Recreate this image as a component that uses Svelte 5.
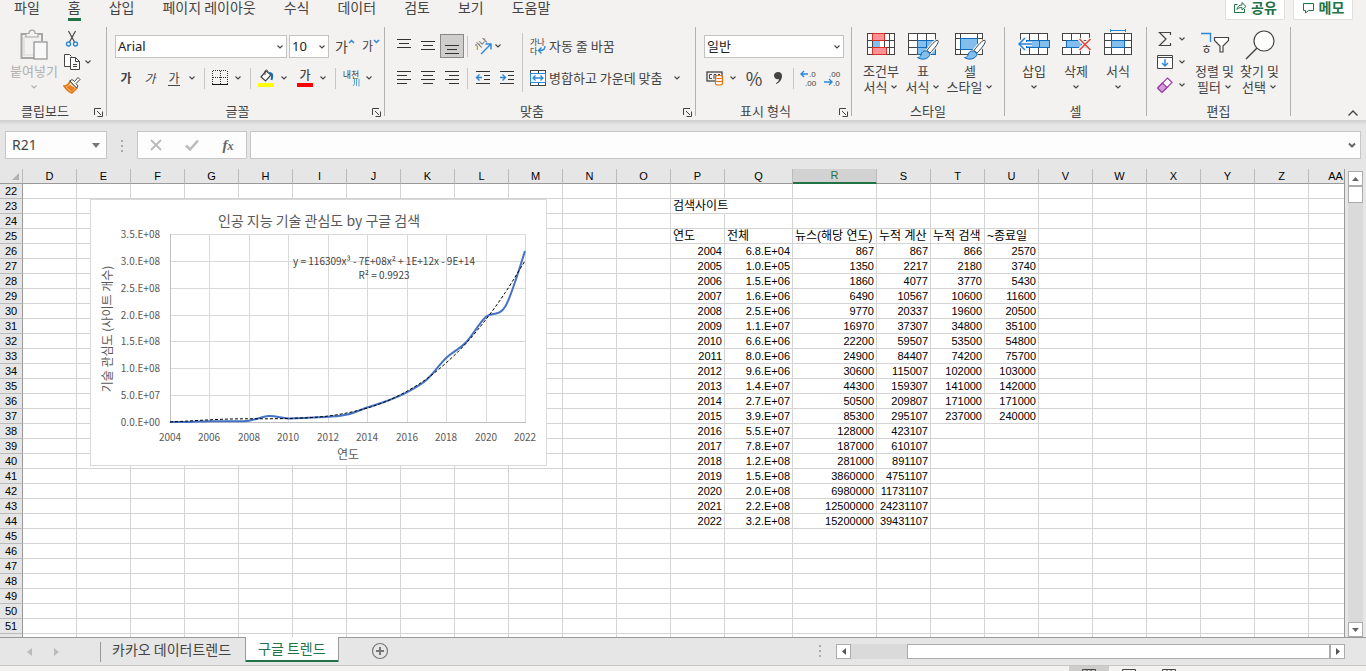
<script>
  const tabs = ['파일', '홈', '삽입', '페이지 레이아웃', '수식', '데이터', '검토', '보기', '도움말'];
  let activeTab = $state('홈');

  const columns = [
    ...'DEFGHIJKLMNOP'.split('').map(name => ({ name, width: 54 })),
    { name: 'Q', width: 68 },
    { name: 'R', width: 84 },
    ...'STUVWXYZ'.split('').map(name => ({ name, width: 54 })),
    { name: 'AA', width: 54 },
  ];

  const firstRow = 22;
  const lastRow = 51;
  const rowNumbers = Array.from({ length: lastRow - firstRow + 1 }, (_, i) => firstRow + i);

  // P, Q, R, S, T, U from row 26 down
  const records = [
    ['2004', '6.8.E+04', '867', '867', '866', '2570'],
    ['2005', '1.0.E+05', '1350', '2217', '2180', '3740'],
    ['2006', '1.5.E+06', '1860', '4077', '3770', '5430'],
    ['2007', '1.6.E+06', '6490', '10567', '10600', '11600'],
    ['2008', '2.5.E+06', '9770', '20337', '19600', '20500'],
    ['2009', '1.1.E+07', '16970', '37307', '34800', '35100'],
    ['2010', '6.6.E+06', '22200', '59507', '53500', '54800'],
    ['2011', '8.0.E+06', '24900', '84407', '74200', '75700'],
    ['2012', '9.6.E+06', '30600', '115007', '102000', '103000'],
    ['2013', '1.4.E+07', '44300', '159307', '141000', '142000'],
    ['2014', '2.7.E+07', '50500', '209807', '171000', '171000'],
    ['2015', '3.9.E+07', '85300', '295107', '237000', '240000'],
    ['2016', '5.5.E+07', '128000', '423107'],
    ['2017', '7.8.E+07', '187000', '610107'],
    ['2018', '1.2.E+08', '281000', '891107'],
    ['2019', '1.5.E+08', '3860000', '4751107'],
    ['2020', '2.0.E+08', '6980000', '11731107'],
    ['2021', '2.2.E+08', '12500000', '24231107'],
    ['2022', '3.2.E+08', '15200000', '39431107'],
  ];

  const labels = {
    P23: '검색사이트',
    P25: '연도',
    Q25: '전체',
    R25: '뉴스(해당 연도)',
    S25: '누적 계산',
    T25: '누적 검색',
    U25: '~종료일',
  };

  function cellText(col, row) {
    if (labels[col + row]) return labels[col + row];
    const i = 'PQRSTU'.indexOf(col);
    return i < 0 ? '' : (records[row - 26]?.[i] ?? '');
  }

  // chart
  const plot = { left: 80, top: 35, width: 355, height: 188 };
  const searches = [0.001, 0.001, 0.015, 0.016, 0.025, 0.11, 0.066, 0.08, 0.096, 0.14, 0.27, 0.39, 0.55, 0.78, 1.19, 1.48, 1.95, 2.15, 3.18];
  const trend = [0.0, 0.02, 0.04, 0.055, 0.06, 0.06, 0.065, 0.08, 0.11, 0.17, 0.26, 0.39, 0.57, 0.8, 1.1, 1.46, 1.9, 2.41, 3.0];
  const yTicks = ['3.5.E+08', '3.0.E+08', '2.5.E+08', '2.0.E+08', '1.5.E+08', '1.0.E+08', '5.0.E+07', '0.0.E+00'];
  const xTicks = [2004, 2006, 2008, 2010, 2012, 2014, 2016, 2018, 2020, 2022];

  const tickX = i => Math.round(plot.left + (i * plot.width) / 9);
  const tickY = i => Math.round(plot.top + (i * plot.height) / 7);

  function smooth(values) {
    const pts = values.map((v, i) => [
      plot.left + (i * plot.width) / 18,
      plot.top + plot.height * (1 - v / 3.5),
    ]);
    let d = `M${pts[0]}`;
    for (let i = 0; i < pts.length - 1; i++) {
      const a = pts[i - 1] ?? pts[i];
      const b = pts[i];
      const c = pts[i + 1];
      const e = pts[i + 2] ?? c;
      d += `C${b[0] + (c[0] - a[0]) / 6},${b[1] + (c[1] - a[1]) / 6} ${c[0] - (e[0] - b[0]) / 6},${c[1] - (e[1] - b[1]) / 6} ${c}`;
    }
    return d;
  }

  let fontName = $state('Arial');
  let fontSize = $state('10');
  let cellName = $state('R21');
  let formula = $state('');
</script>

{#snippet chev()}
  <svg class="chev" width="8" height="6" viewBox="0 0 8 6"><path d="M1.500 1.500L4 4l2.500-2.500" fill="none" stroke="currentColor" stroke-width="1.100" /></svg>
{/snippet}

{#snippet drop(label)}
  <button class="drop" aria-label={label}>{@render chev()}</button>
{/snippet}

{#snippet lines(rows)}
  <svg width="16" height="18" viewBox="0 0 16 18" shape-rendering="crispEdges">
    {#each rows as [x, y, w]}
      <rect {x} {y} width={w} height="1" fill="#333" />
    {/each}
  </svg>
{/snippet}

{#snippet footer(name, launcher)}
  <div class="footer">
    <span>{name}</span>
    {#if launcher}
      <button aria-label="{name} 설정">
        <svg width="9" height="9" viewBox="0 0 9 9" fill="none" stroke="#444"><path d="M.5 7V.5H7M3 3l4 4M8.500 3.500v5h-5" /></svg>
      </button>
    {/if}
  </div>
{/snippet}

{#snippet brush()}
  <path d="M31 7.500c-2-1.500-8 6-11 10l3 2.500c4-4 9.500-10.500 8-12.500z" fill="#fff" stroke="#f3f2f1" stroke-width="3" />
  <path d="M31 7.500c-2-1.500-8 6-11 10l3 2.500c4-4 9.500-10.500 8-12.500z" fill="#fff" stroke="#444" />
  <path d="M19.500 18c-3-.5-5 1-5.500 4-.5 2-2 2.500-3.500 2.500 4 3 12 2 12.500-4z" fill="#83beec" stroke="#0f6cbd" />
{/snippet}

<div class="app">
  <header class="tabs">
    <nav>
      {#each tabs as tab}
        <button class:active={tab === activeTab} onclick={() => (activeTab = tab)}><span>{tab}</span></button>
      {/each}
    </nav>
    <div class="actions">
      <button>
        <svg width="14" height="14" viewBox="0 0 14 14" fill="none" stroke="#217346"><path d="M4.500 4.500h-3v8h10V9" /><path d="M4 9.500c.5-3 2-4.500 5-4.500V2.500l4 4-4 3.500V7.500C6.500 7.500 5 8 4 9.500z" /></svg>
        공유
      </button>
      <button>
        <svg width="13" height="13" viewBox="0 0 13 13" fill="none" stroke="#217346"><path d="M1.500 2.500h10v7h-5l-3 2.500V9.500h-2z" /></svg>
        메모
      </button>
    </div>
  </header>

  <div class="ribbon">
    <section class="group">
      <div class="body clipboard">
        <button class="big disabled">
          <svg width="28" height="32" viewBox="0 0 28 32" fill="none" stroke="#a6a6a6" stroke-width="1.200">
            <path d="M7 5H1.500v24H14M18 5h4v7" stroke-width="2" /><path d="M4 8v18h10M4 8h2" stroke="#d8d8d8" />
            <path d="M6 8V4.500h3C9 0 15 0 15 4.500h3V8z" fill="#f3f2f1" /><rect x="14" y="13" width="13" height="17" fill="#f8f8f8" stroke="#8e8e8e" />
          </svg>
          <span>붙여넣기</span>
          {@render chev()}
        </button>
        <div class="stack">
          <div class="line">
            <button aria-label="잘라내기">
              <svg width="16" height="18" viewBox="0 0 16 18" fill="none"><path d="M4.500 1l6 11M11.500 1l-6 11" stroke="#444" stroke-width="1.200" /><circle cx="4.500" cy="14" r="2" stroke="#2b88d8" stroke-width="1.400" /><circle cx="11.500" cy="14" r="2" stroke="#2b88d8" stroke-width="1.400" /></svg>
            </button>
          </div>
          <div class="line">
            <button aria-label="복사">
              <svg width="18" height="18" viewBox="0 0 18 18" fill="#fff" stroke="#444"><path d="M7.500 13.500h-6v-12h5l2 2" /><path d="M7.500 4.500h5l4 4v8h-9z" /><path d="M12.500 4.500v4h4M10 11.500h4M10 13.500h4" fill="none" /></svg>
            </button>
            {@render drop('복사 옵션')}
          </div>
          <div class="line">
            <button aria-label="서식 복사">
              <svg width="18" height="18" viewBox="0 0 18 18"><path d="M7 5l7 7-5 5c-3-1-6-4-8-7 3 0 5-2 6-5z" fill="#fbe0c6" stroke="#e3730b" stroke-width="1.500" /><path d="M3 11l6 5 3-4-5-3z" fill="#ed7d1a" /><path d="M7 5l2-1.500 2.500 2L15 1.500l2 2-4 4 2 2.500-1.500 2z" fill="#fff" stroke="#444" /></svg>
            </button>
          </div>
        </div>
      </div>
      {@render footer('클립보드', true)}
    </section>

    <section class="group font">
      <div class="body rows">
        <div class="row combos">
          <label class="combo wide">
            <select bind:value={fontName} aria-label="글꼴"><option>Arial</option></select>
            {@render chev()}
          </label>
          <label class="combo size">
            <select bind:value={fontSize} aria-label="글꼴 크기"><option>10</option></select>
            {@render chev()}
          </label>
          <button class="tool grow">가<svg width="7" height="5" viewBox="0 0 7 5"><path d="M1 4l2.500-2.500L6 4" fill="none" stroke="#2b88d8" stroke-width="1.500" /></svg></button>
          <button class="tool shrink">가<svg width="7" height="5" viewBox="0 0 7 5"><path d="M1 1l2.500 2.500L6 1" fill="none" stroke="#2b88d8" stroke-width="1.500" /></svg></button>
        </div>
        <div class="row">
          <button class="tool bold">가</button>
          <button class="tool italic">가</button>
          <button class="tool underline"><span>가</span></button>
          {@render drop('밑줄 옵션')}
          <i class="sep far"></i>
          <button class="tool" aria-label="테두리">
            <svg width="16" height="16" viewBox="0 0 16 16" shape-rendering="crispEdges"><path d="M1 .5h14M.5 1v13M15.500 1v13M8.500 1v13M1 7.500h14" stroke="#333" stroke-dasharray="1 1" fill="none" /><rect y="14" width="16" height="1" fill="#111" /></svg>
          </button>
          {@render drop('테두리 옵션')}
          <i class="sep far"></i>
          <button class="tool" aria-label="채우기 색">
            <svg width="16" height="18" viewBox="0 0 16 18"><path d="M8 2L3 8l4.500 4 5.500-6z" fill="#fff" stroke="#444" stroke-width="1.200" /><path d="M7 6V2.500C7 .5 10 .5 10 3" fill="none" stroke="#444" /><path d="M11 4c4 0 3.500 3 2.500 7" fill="none" stroke="#0f6cbd" stroke-width="2" /><rect y="14" width="16" height="4" fill="#ff0" /></svg>
          </button>
          {@render drop('채우기 색 옵션')}
          <button class="tool color"><span>가</span></button>
          {@render drop('글꼴 색 옵션')}
          <i class="sep far"></i>
          <button class="tool phonetic">내천<svg width="8" height="8" viewBox="0 0 8 8"><path d="M2.500 0v5L1 7M4.500 0v7M7 0v7.500" fill="none" stroke="#5ba3d9" /></svg></button>
          {@render drop('윗주 옵션')}
        </div>
      </div>
      {@render footer('글꼴', true)}
    </section>

    <section class="group align">
      <div class="body">
        <div class="rows pane">
          <div class="row">
            <button class="tool" aria-label="위쪽 맞춤">{@render lines([[1, 2, 14], [3, 6, 10], [1, 10, 14]])}</button>
            <button class="tool" aria-label="가운데 맞춤">{@render lines([[1, 4, 14], [3, 8, 10], [1, 12, 14]])}</button>
            <button class="tool pressed" aria-label="아래쪽 맞춤">{@render lines([[1, 8, 14], [3, 12, 10], [1, 16, 14]])}</button>
            <i class="sep"></i>
            <button class="orient" aria-label="방향">
              <svg width="17" height="17" viewBox="0 0 17 17"><text x="1" y="12" transform="rotate(-45 3 11)" font-size="8" fill="#444">가나</text><path d="M6 16L15.500 6.500M10.500 6H16v5.500" fill="none" stroke="#2b88d8" stroke-width="1.400" /></svg>
              {@render chev()}
            </button>
          </div>
          <div class="row">
            <button class="tool" aria-label="왼쪽 맞춤">{@render lines([[1, 2, 14], [1, 6, 10], [1, 10, 14], [1, 14, 10]])}</button>
            <button class="tool" aria-label="가운데 맞춤">{@render lines([[1, 2, 14], [3, 6, 10], [1, 10, 14], [3, 14, 10]])}</button>
            <button class="tool" aria-label="오른쪽 맞춤">{@render lines([[1, 2, 14], [5, 6, 10], [1, 10, 14], [5, 14, 10]])}</button>
            <i class="sep"></i>
            <button class="tool" aria-label="내어쓰기">
              <svg width="16" height="18" viewBox="0 0 16 18" fill="none"><path d="M1 2.500h14M9 6.500h6M9 10.500h6M1 14.500h14" stroke="#333" /><path d="M7 8.500H2M4.500 5.500l-3 3 3 3" stroke="#2b88d8" stroke-width="1.400" /></svg>
            </button>
            <button class="tool" aria-label="들여쓰기">
              <svg width="16" height="18" viewBox="0 0 16 18" fill="none"><path d="M1 2.500h14M9 6.500h6M9 10.500h6M1 14.500h14" stroke="#333" /><path d="M1 8.500h5M3.500 5.500l3 3-3 3" stroke="#2b88d8" stroke-width="1.400" /></svg>
            </button>
          </div>
        </div>
        <i class="sep tall"></i>
        <div class="rows texts">
          <button class="row">
            <svg width="16" height="20" viewBox="0 0 16 20"><text x="0" y="9" font-size="8" fill="#333">가나</text><text x="0" y="18" font-size="8" fill="#333">다</text><path d="M15 10c0 3-1 4.500-6 4.500M11.500 11.500l-3 3 3 3" fill="none" stroke="#2b88d8" stroke-width="1.400" /></svg>
            자동 줄 바꿈
          </button>
          <button class="row">
            <svg width="16" height="16" viewBox="0 0 16 16" fill="#fff" stroke="#444" shape-rendering="crispEdges"><rect x=".5" y=".5" width="15" height="15" /><path d="M8.500 0v16" /><rect x=".5" y="3.500" width="15" height="9" stroke="#2b88d8" /><path d="M3 8h10M5.500 5.500L3 8l2.500 2.500M10.500 5.500L13 8l-2.500 2.500" fill="none" stroke="#2b88d8" stroke-width="1.300" shape-rendering="auto" /></svg>
            병합하고 가운데 맞춤
            {@render chev()}
          </button>
        </div>
      </div>
      {@render footer('맞춤', true)}
    </section>

    <section class="group number">
      <div class="body rows">
        <div class="row combos">
          <label class="combo format">
            <select aria-label="표시 형식"><option>일반</option></select>
            {@render chev()}
          </label>
        </div>
        <div class="row">
          <button class="tool" aria-label="회계 표시 형식">
            <svg width="18" height="16" viewBox="0 0 18 16" fill="none"><rect x="1" y="2" width="15" height="9" stroke="#444" stroke-width="1.300" /><path d="M6 4.500H3.500v4H6M8 9V4.500h2V9M12 4.500h2" stroke="#444" /><path d="M9.500 7v6.500c0 2 7 2 7 0V7c0-2-7-2-7 0z" fill="#fff" stroke="#e3730b" stroke-width="1.200" /><path d="M9.500 7.500c0 1.500 7 1.500 7 0M9.500 10.500c0 1.500 7 1.500 7 0" stroke="#e3730b" stroke-width="1.200" /></svg>
          </button>
          {@render drop('회계 옵션')}
          <button class="tool percent">%</button>
          <button class="tool" aria-label="쉼표 스타일">
            <svg width="10" height="14" viewBox="0 0 10 14"><path d="M5 1c3 0 4 2 4 4 0 4-3 7-6 8v-1c2-1 3-2.500 3-4C3.500 9 1 7 1 4.500 1 2.500 3 1 5 1z" fill="#444" /></svg>
          </button>
          <i class="sep"></i>
          <button class="tool" aria-label="자릿수 늘림">
            <svg width="18" height="20" viewBox="0 0 18 20"><text x="9" y="9" font-size="8" fill="#444">.0</text><text x="5" y="18" font-size="8" fill="#444">.00</text><path d="M8 6H1.500M4 3L1 6l3 3" fill="none" stroke="#2b88d8" stroke-width="1.400" /></svg>
          </button>
          <button class="tool" aria-label="자릿수 줄임">
            <svg width="18" height="20" viewBox="0 0 18 20"><text x="5" y="9" font-size="8" fill="#444">.00</text><text x="9" y="18" font-size="8" fill="#444">.0</text><path d="M0 14h7.500M5 11l3 3-3 3" fill="none" stroke="#2b88d8" stroke-width="1.400" /></svg>
          </button>
        </div>
      </div>
      {@render footer('표시 형식', true)}
    </section>

    <section class="group styles">
      <div class="body">
        <button class="big">
          <svg width="30" height="32" viewBox="0 0 30 32" fill="#fff" stroke="#444" shape-rendering="crispEdges"><rect x="1.500" y="4.500" width="27" height="21" /><path d="M1 11.500h28M1 18.500h28M6.500 4v22M18.500 4v22M23.500 4v22" /><path d="M6.500 4.500h12v7h-12zM6.500 18.500h14v7h-14z" fill="#ff9197" stroke="#d93025" /><path d="M7 12h7v6H7z" fill="#83beec" stroke="none" /></svg>
          <span>조건부</span>
          <span>서식{@render chev()}</span>
        </button>
        <button class="big">
          <svg width="32" height="32" viewBox="0 0 32 32" fill="#fff" stroke="#444"><g shape-rendering="crispEdges"><rect x="1.500" y="4.500" width="27" height="21" /><path d="M1 11.500h28M1 18.500h28M10.500 4v22M19.500 4v22" /><path d="M10.500 11.500h18v14h-18z" fill="#83beec" stroke="#0f6cbd" /><path d="M10 18.500h18M19.500 12v13" stroke="#0f6cbd" /></g><g transform="translate(0 4)">{@render brush()}</g></svg>
          <span>표</span>
          <span>서식{@render chev()}</span>
        </button>
        <button class="big long">
          <svg width="32" height="32" viewBox="0 0 32 32" fill="#fff" stroke="#444"><g shape-rendering="crispEdges"><rect x="1.500" y="4.500" width="27" height="21" /><path d="M1 9.500h28M1 20.500h28M6.500 4v22M23.500 4v22" /><path d="M6.500 9.500h17v11h-17z" fill="#83beec" stroke="#0f6cbd" /></g><g transform="translate(0 4)">{@render brush()}</g></svg>
          <span>셀</span>
          <span>스타일{@render chev()}</span>
        </button>
      </div>
      {@render footer('스타일', false)}
    </section>

    <section class="group cells">
      <div class="body">
        <button class="big">
          <svg width="34" height="32" viewBox="0 0 34 32" fill="#fff" stroke="#444"><g shape-rendering="crispEdges"><path d="M3.500 4.500h27v21h-27zM12.500 4v22M21.500 4v22" /><path d="M9.500 11.500h23v7h-23zM22.500 11v8" fill="#83beec" stroke="#0f6cbd" /></g><path d="M15 15H2.500M8 9l-6 6 6 6" fill="none" stroke="#f3f2f1" stroke-width="4" /><path d="M15 15H2.500M8 9l-6 6 6 6" fill="none" stroke="#2b88d8" stroke-width="1.500" /></svg>
          <span>삽입</span>
          {@render chev()}
        </button>
        <button class="big">
          <svg width="34" height="32" viewBox="0 0 34 32" fill="#fff" stroke="#444"><g shape-rendering="crispEdges"><path d="M3.500 4.500h27v7h-27zM12.500 4v7M21.500 4v7M3.500 18.500h27v7h-27zM12.500 18v8M21.500 18v8" /><path d="M7.500 11.500h15v7h-15z" fill="#83beec" stroke="#0f6cbd" /></g><path d="M20.500 10l11 11M31.500 10l-11 11" stroke="#f3f2f1" stroke-width="4" /><path d="M20.500 10l11 11M31.500 10l-11 11" stroke="#e8403a" stroke-width="1.500" /></svg>
          <span>삭제</span>
          {@render chev()}
        </button>
        <button class="big">
          <svg width="34" height="32" viewBox="0 0 34 32" fill="#fff" stroke="#444" shape-rendering="crispEdges"><path d="M3.500 4.500h27v21h-27zM3 11.500h28M3 18.500h28M10.500 4v22M23.500 4v22" /><path d="M10.500 11.500h13v7h-13z" fill="#83beec" stroke="#0f6cbd" /><path d="M9.500 0v3M24.500 0v3M9 1.500h16" stroke="#2b88d8" /></svg>
          <span>서식</span>
          {@render chev()}
        </button>
      </div>
      {@render footer('셀', false)}
    </section>

    <section class="group edit">
      <div class="body">
        <div class="stack">
          <div class="line">
            <button aria-label="자동 합계"><svg width="16" height="16" viewBox="0 0 16 16"><path d="M13.500 4V1.500h-11L9 8l-6.500 6.500h11V12" fill="none" stroke="#444" stroke-width="1.200" /></svg></button>
            {@render drop('합계 옵션')}
          </div>
          <div class="line">
            <button aria-label="채우기"><svg width="16" height="14" viewBox="0 0 16 14" fill="#fff" stroke="#444"><path d="M.5.5h15v13H.500zM0 2.500h16" /><path d="M8 4v7M5 8l3 3 3-3" fill="none" stroke="#2b88d8" stroke-width="1.400" /></svg></button>
            {@render drop('채우기 옵션')}
          </div>
          <div class="line">
            <button aria-label="지우기"><svg width="16" height="16" viewBox="0 0 16 16" stroke="#9b3fa5" stroke-width="1.200"><path d="M10.500 1l4.500 4.500L5.500 15H4.500L1 11.500v-1z" fill="#fff" /><path d="M5.500 6L1 10.500v1L4.500 15h1l4.500-4.500z" fill="#d59ddb" /></svg></button>
            {@render drop('지우기 옵션')}
          </div>
        </div>
        <button class="big">
          <svg width="32" height="32" viewBox="0 0 32 32" fill="none"><path d="M2 4.500h9.500V13" stroke="#2b88d8" stroke-width="1.400" /><text x="2" y="25" font-size="12" fill="#333">ㅎ</text><path d="M15.500 8.500h14v3l-5.500 5.500v6h-3v-6l-5.500-5.500z" fill="#fff" stroke="#444" stroke-width="1.200" /></svg>
          <span>정렬 및</span>
          <span>필터{@render chev()}</span>
        </button>
        <button class="big">
          <svg width="32" height="32" viewBox="0 0 32 32"><circle cx="20" cy="12" r="10" fill="#fff" stroke="#444" stroke-width="1.200" /><path d="M13 19L2 30" stroke="#444" stroke-width="1.400" /></svg>
          <span>찾기 및</span>
          <span>선택{@render chev()}</span>
        </button>
      </div>
      {@render footer('편집', false)}
    </section>

    <button class="collapse" aria-label="리본 메뉴 축소">
      <svg width="12" height="8" viewBox="0 0 12 8"><path d="M1.500 6.500L6 2l4.500 4.500" fill="none" stroke="#444" stroke-width="1.400" /></svg>
    </button>
  </div>

  <div class="formula-bar">
    <div class="box name">
      <input bind:value={cellName} aria-label="이름 상자" />
      <button aria-label="이름 목록"><svg width="8" height="5" viewBox="0 0 8 5"><path d="M0 0h8L4 5z" fill="#777" /></svg></button>
    </div>
    <svg class="dots" width="3" height="12" viewBox="0 0 3 12" fill="#aaa"><path d="M0 0h2v2H0zM0 5h2v2H0zM0 10h2v2H0z" /></svg>
    <div class="box checks">
      <button aria-label="취소"><svg width="12" height="12" viewBox="0 0 12 12"><path d="M1 1l10 10M11 1L1 11" stroke="#bbb" stroke-width="1.800" /></svg></button>
      <button aria-label="입력"><svg width="14" height="12" viewBox="0 0 14 12"><path d="M1 6.500L5 10.500 13 1.500" fill="none" stroke="#bbb" stroke-width="2.500" /></svg></button>
      <button class="fx">f<small>x</small></button>
    </div>
    <div class="box entry">
      <input bind:value={formula} aria-label="수식 입력줄" />
      <button aria-label="수식 입력줄 확장"><svg width="8" height="7" viewBox="0 0 8 7"><path d="M1 1.500l3 3 3-3" fill="none" stroke="#666" stroke-width="2" /></svg></button>
    </div>
  </div>

  <main>
    <div class="sheet">
      <table>
        <colgroup>
          <col style="width: 23px" />
          {#each columns as col}
            <col style="width: {col.width}px" />
          {/each}
        </colgroup>
        <thead>
          <tr>
            <th class="corner"><svg width="7" height="7" viewBox="0 0 7 7"><path d="M7 0v7H0z" fill="#b2b2b2" /></svg></th>
            {#each columns as col}
              <th class:selected={col.name === 'R'}>{col.name}</th>
            {/each}
          </tr>
        </thead>
        <tbody>
          {#each rowNumbers as row}
            <tr>
              <th>{row}</th>
              {#each columns as col}
                <td class:label={labels[col.name + row]} class:spill={col.name + row === 'P23'}>{cellText(col.name, row)}</td>
              {/each}
            </tr>
          {/each}
          <tr>
            <th></th>
            {#each columns as _}<td></td>{/each}
          </tr>
        </tbody>
      </table>

      <svg class="chart" width="457" height="268" viewBox="0 0 457 268">
        <rect x=".5" y=".5" width="456" height="266" fill="#fff" stroke="#d9d9d9" />
        <g stroke="#d9d9d9" shape-rendering="crispEdges">
          {#each yTicks as _, i}
            <path d="M{plot.left} {tickY(i) + 0.5}h{plot.width}" />
          {/each}
          {#each xTicks as _, i}
            <path d="M{tickX(i) + 0.5} {plot.top}v{plot.height}" />
          {/each}
          <path d="M{plot.left + 0.5} {plot.top}v{plot.height + 0.5}h{plot.width}" fill="none" stroke="#bfbfbf" />
        </g>
        <path d={smooth(searches)} fill="none" stroke="#4472c4" stroke-width="2" />
        <path d={smooth(trend)} fill="none" stroke="#000" stroke-dasharray="3 2" />
        <g fill="#595959" font-size="10">
          {#each yTicks as tick, i}
            <text x="70" y={tickY(i) + 4} text-anchor="end">{tick}</text>
          {/each}
          {#each xTicks as tick, i}
            <text x={tickX(i)} y="242" text-anchor="middle">{tick}</text>
          {/each}
        </g>
        <g fill="#595959" text-anchor="middle">
          <text x="229" y="27" font-size="14">인공 지능 기술 관심도 by 구글 검색</text>
          <text x="258" y="260" font-size="12">연도</text>
          <text x="22" y="130" font-size="12" transform="rotate(-90 22 130)">기술 관심도 (사이트 개수)</text>
          <text x="294" y="66" font-size="10" fill="#444">y = 116309x³ - 7E+08x² + 1E+12x - 9E+14</text>
          <text x="294" y="80" font-size="10" fill="#444">R² = 0.9923</text>
        </g>
      </svg>
    </div>
    <div class="vscroll">
      <button aria-label="위로"><svg width="7" height="4" viewBox="0 0 7 4"><path d="M0 4h7L3.500 0z" fill="#666" /></svg></button>
      <div class="track"><div class="thumb"></div></div>
      <button aria-label="아래로"><svg width="7" height="4" viewBox="0 0 7 4"><path d="M0 0h7L3.500 4z" fill="#666" /></svg></button>
    </div>
  </main>

  <footer class="sheets">
    <div class="nav">
      <button aria-label="이전 시트"><svg width="5" height="8" viewBox="0 0 5 8"><path d="M5 0v8L0 4z" fill="#bbb" /></svg></button>
      <button aria-label="다음 시트"><svg width="5" height="8" viewBox="0 0 5 8"><path d="M0 0v8l5-4z" fill="#bbb" /></svg></button>
    </div>
    <button class="sheet-tab">카카오 데이터트렌드</button>
    <button class="sheet-tab current">구글 트렌드</button>
    <button class="add" aria-label="새 시트">
      <svg width="18" height="18" viewBox="0 0 18 18" fill="none" stroke="#777"><circle cx="9" cy="9" r="7.500" stroke-width="1.200" /><path d="M9 5v8M5 9h8" stroke-width="2" /></svg>
    </button>
    <svg class="dots" width="3" height="12" viewBox="0 0 3 12" fill="#aaa"><path d="M0 0h2v2H0zM0 5h2v2H0zM0 10h2v2H0z" /></svg>
    <div class="hscroll">
      <button aria-label="왼쪽으로"><svg width="4" height="7" viewBox="0 0 4 7"><path d="M4 0v7L0 3.500z" fill="#555" /></svg></button>
      <div class="track"><div class="thumb"></div></div>
      <button aria-label="오른쪽으로"><svg width="4" height="7" viewBox="0 0 4 7"><path d="M0 0v7l4-3.500z" fill="#555" /></svg></button>
    </div>
  </footer>

  <div class="status">
    <button class="on" aria-label="기본"><svg width="14" height="12" viewBox="0 0 14 12" fill="none" stroke="#444"><path d="M.5.5h13v11H.500zM5 0v12M9 0v12M0 4.500h14" /></svg></button>
    <button aria-label="페이지 레이아웃"><svg width="14" height="12" viewBox="0 0 14 12" fill="none" stroke="#444"><path d="M.5.5h13v11H.500z" /></svg></button>
    <button aria-label="페이지 나누기 미리 보기"><svg width="14" height="12" viewBox="0 0 14 12" fill="none" stroke="#444"><path d="M.5.5h13v11H.500zM5 0v5M9 0v5" /></svg></button>
  </div>
</div>

<style>
  :global(body) {
    margin: 0;
    overflow: hidden;
  }

  .app {
    display: flex;
    flex-direction: column;
    height: 100vh;
    background: #e6e6e6;
    color: #444;
    font: 13px/16px 'Noto Sans CJK KR', sans-serif;
  }

  button {
    display: flex;
    align-items: center;
    justify-content: center;
    padding: 0;
    border: 0;
    background: none;
    color: inherit;
    font: inherit;
    white-space: nowrap;
  }

  svg {
    flex: none;
    display: block;
  }

  .tabs {
    flex: none;
    display: flex;
    justify-content: space-between;
    height: 27px;
    background: #f3f2f1;
    font-size: 14px;
    line-height: 14px;
  }

  .tabs nav {
    display: flex;
    align-items: flex-start;
  }

  .tabs nav button {
    padding: 0 14px;
  }

  .tabs nav span {
    height: 18px;
    border-bottom: 3px solid transparent;
  }

  .tabs .active span {
    border-color: #217346;
  }

  .tabs .actions {
    display: flex;
    gap: 8px;
    padding-right: 13px;
  }

  .actions button {
    gap: 4px;
    width: 60px;
    height: 20px;
    padding-bottom: 5px;
    box-sizing: border-box;
    border: 1px solid #e1dfdd;
    border-top: 0;
    border-radius: 0 0 2px 2px;
    background: #fff;
    color: #217346;
    font-weight: bold;
  }

  .ribbon {
    flex: none;
    display: flex;
    height: 93px;
    background: #f3f2f1;
  }

  .ribbon svg text {
    font-family: 'Liberation Sans', 'Noto Sans CJK KR', sans-serif;
  }

  .group {
    display: flex;
    flex-direction: column;
    height: 89px;
    border-right: 1px solid #b3b1af;
  }

  .body {
    flex: none;
    display: flex;
    height: 76px;
    padding: 0 8px;
    box-sizing: border-box;
  }

  .rows {
    display: flex;
    flex-direction: column;
    gap: 8px;
    padding-top: 7px;
  }

  .row {
    display: flex;
    align-items: center;
    height: 24px;
  }

  .footer {
    flex: none;
    display: flex;
    align-items: center;
    height: 16px;
  }

  .footer span {
    flex: 1;
    text-align: center;
  }

  .footer button {
    width: 16px;
    height: 12px;
    padding-top: 2px;
  }

  .chev {
    display: inline-block;
  }

  .drop {
    width: 12px;
    height: 22px;
  }

  .tool {
    width: 24px;
    height: 24px;
    box-sizing: border-box;
  }

  .pressed {
    border: 1px solid #888;
    background: #d0cecd;
  }

  .sep {
    width: 1px;
    height: 21px;
    margin: 0 3px;
    background: #c8c6c4;
  }

  .sep.far {
    margin-left: 6px;
  }

  .sep.tall {
    height: 59px;
    margin: 6px 0 0;
  }

  .big {
    flex-direction: column;
    justify-content: flex-start;
    width: 42px;
    height: 76px;
    padding-top: 2px;
    box-sizing: border-box;
  }

  .big > svg:first-child {
    margin-bottom: 2px;
  }

  .big > .chev {
    margin-top: 5px;
  }

  .big span {
    display: flex;
    align-items: center;
    gap: 3px;
  }

  .big.long {
    width: 52px;
  }

  .big.disabled {
    width: 56px;
    color: #b1afad;
  }

  .stack .line {
    display: flex;
    align-items: center;
    height: 23px;
  }

  .clipboard {
    padding: 0 9px 0 6px;
  }

  .clipboard .line > button:first-child,
  .edit .line > button:first-child {
    width: 20px;
  }

  .group:first-child {
    width: 106px;
  }

  .font {
    width: 277px;
  }

  .font .body,
  .number .body {
    padding: 7px 0 0 7px;
  }

  .row.combos {
    gap: 2px;
    padding-left: 1px;
  }

  .combo {
    position: relative;
    display: flex;
  }

  .combo select {
    width: 100%;
    height: 23px;
    padding: 0 2px;
    border: 1px solid #c3c3c3;
    border-radius: 0;
    appearance: none;
    background: #fff;
    color: #222;
    font: 13px/20px 'Noto Sans', 'Noto Sans CJK KR', sans-serif;
  }

  .combo .chev {
    position: absolute;
    top: 9px;
    right: 3px;
  }

  .combo.wide {
    width: 172px;
  }

  .combo.size {
    width: 40px;
  }

  .combo.format {
    width: 140px;
  }

  .grow svg,
  .shrink svg {
    margin-bottom: 10px;
  }

  .grow {
    margin-left: 2px;
    font-size: 14px;
  }

  .shrink {
    font-size: 12px;
  }

  .bold {
    font-size: 12px;
    font-weight: bold;
  }

  .italic {
    font-size: 12px;
    font-style: italic;
  }

  .underline {
    font-size: 12px;
  }

  .underline span {
    border-bottom: 1px solid #444;
    line-height: 14px;
  }

  .color span {
    width: 16px;
    height: 14px;
    border-bottom: 4px solid #f00;
    font-weight: 500;
    font-size: 12px;
    line-height: 12px;
  }

  .color {
    margin-left: 3px;
  }

  .phonetic {
    flex-direction: column;
    font-size: 9px;
    line-height: 9px;
  }

  .phonetic svg {
    margin-left: 10px;
  }

  .align {
    width: 310px;
  }

  .align .body {
    padding: 0 0 0 7px;
  }

  .pane {
    width: 130px;
  }

  .orient {
    gap: 2px;
    padding-left: 4px;
  }

  .texts {
    align-items: flex-start;
    padding-left: 7px;
  }

  .texts .row {
    gap: 3px;
  }

  .texts .chev {
    margin-left: 8px;
  }

  .number {
    width: 155px;
  }

  .percent {
    margin-left: 3px;
    font-size: 18px;
  }

  .styles {
    width: 152px;
  }

  .styles .body,
  .cells .body {
    padding-right: 0;
  }

  .cells {
    width: 141px;
  }

  .edit {
    width: 143px;
  }

  .edit .stack {
    width: 37px;
  }

  .edit .drop {
    width: 14px;
  }

  .edit .big {
    width: 45px;
  }

  .collapse {
    align-self: flex-end;
    margin-left: auto;
    margin-right: 7px;
    height: 14px;
  }

  .formula-bar {
    flex: none;
    display: flex;
    align-items: flex-start;
    height: 38px;
    padding: 11px 5px 0;
    background: linear-gradient(#cfcfcf, #e6e6e6 5px);
  }

  .box {
    display: flex;
    height: 28px;
    box-sizing: border-box;
    border: 1px solid #c6c6c6;
    background: #fdfdfd;
  }

  .box input {
    flex: 1;
    min-width: 0;
    padding: 0 6px;
    border: 0;
    background: none;
    color: #444;
    font: 14px/20px 'Noto Sans', 'Noto Sans CJK KR', sans-serif;
  }

  .box.name {
    width: 102px;
  }

  .name button {
    width: 20px;
  }

  .formula-bar .dots {
    margin: 9px 13px 0 14px;
  }

  .checks {
    justify-content: space-around;
    width: 110px;
    margin-right: 3px;
  }

  .checks button {
    width: 36px;
  }

  .fx {
    color: #666;
    font: italic bold 15px 'Liberation Serif', serif;
  }

  .fx small {
    font-size: 12px;
    padding-top: 3px;
  }

  .entry {
    flex: 1;
  }

  .entry button {
    width: 16px;
  }

  main {
    flex: 1;
    display: flex;
    min-height: 0;
    border-bottom: 1px solid #999;
  }

  .sheet {
    position: relative;
    flex: 1;
    min-width: 0;
    overflow: hidden;
    border-right: 1px solid #999;
  }

  /* the colgroup sets the real width */
  table {
    width: 1px;
    table-layout: fixed;
    border-collapse: separate;
    border-spacing: 0;
    color: #000;
    font: 11px/14px 'Liberation Sans', 'Noto Sans CJK KR', sans-serif;
  }

  th,
  td {
    height: 15px;
    box-sizing: border-box;
    padding: 0 2px;
    border-right: 1px solid #d4d4d4;
    border-bottom: 1px solid #d4d4d4;
    white-space: nowrap;
  }

  td {
    background: #fff;
    text-align: right;
  }

  td.label {
    text-align: left;
    font-size: 12px;
  }

  td.spill {
    position: relative;
    border-right-color: #fff;
  }

  th {
    padding: 0;
    background: #e6e6e6;
    border-color: #bbb;
    font-weight: normal;
  }

  thead th {
    border-bottom-color: #999;
  }

  tbody th {
    border-right-color: #999;
  }

  th.selected {
    border-bottom: 2px solid #217346;
    background: #d2d2d2;
    color: #217346;
    line-height: 13px;
  }

  .corner svg {
    margin-left: 12px;
  }

  .chart {
    position: absolute;
    top: 30px;
    left: 90px;
    font-family: 'Noto Sans CJK KR', sans-serif;
  }

  .vscroll {
    display: flex;
    flex-direction: column;
    width: 15px;
    padding: 2px 3px 0;
  }

  .vscroll button,
  .hscroll button,
  .thumb {
    box-sizing: border-box;
    border: 1px solid #ababab;
    background: #fff;
  }

  .vscroll button {
    height: 15px;
  }

  .track {
    flex: 1;
    background: #dadada;
  }

  .vscroll .thumb {
    height: 17px;
  }

  .sheets {
    flex: none;
    display: flex;
    align-items: flex-start;
    height: 27px;
    font-size: 14px;
  }

  .nav {
    display: flex;
    gap: 22px;
    width: 73px;
    height: 20px;
    margin-top: 4px;
    padding-left: 27px;
    border-right: 1px solid #999;
  }

  .sheet-tab {
    height: 24px;
    padding: 0 14px 3px 11px;
  }

  .sheet-tab.current {
    height: 22px;
    margin-top: -1px;
    padding: 0 12px 3px;
    box-sizing: content-box;
    border: 1px solid #999;
    border-width: 0 1px;
    background: #fff;
    box-shadow: inset 0 -2px #217346;
    color: #217346;
  }

  .add {
    margin: 4px 0 0 32px;
  }

  .sheets .dots {
    margin: 7px 14px 0 auto;
  }

  .hscroll {
    display: flex;
    width: 38%;
    max-width: 509px;
    height: 15px;
    margin: 6px 21px 0 0;
  }

  .hscroll button {
    width: 15px;
  }

  .hscroll .thumb {
    height: 15px;
    margin-left: 56px;
  }

  .status {
    flex: none;
    display: flex;
    justify-content: flex-end;
    height: 5px;
    padding-right: 177px;
    overflow: hidden;
    border-top: 1px solid #c6c6c6;
    background: #f3f2f1;
  }

  .status button {
    align-items: flex-start;
    width: 40px;
    padding-top: 3px;
  }

  .status .on {
    background: #cfcdcc;
  }
</style>
